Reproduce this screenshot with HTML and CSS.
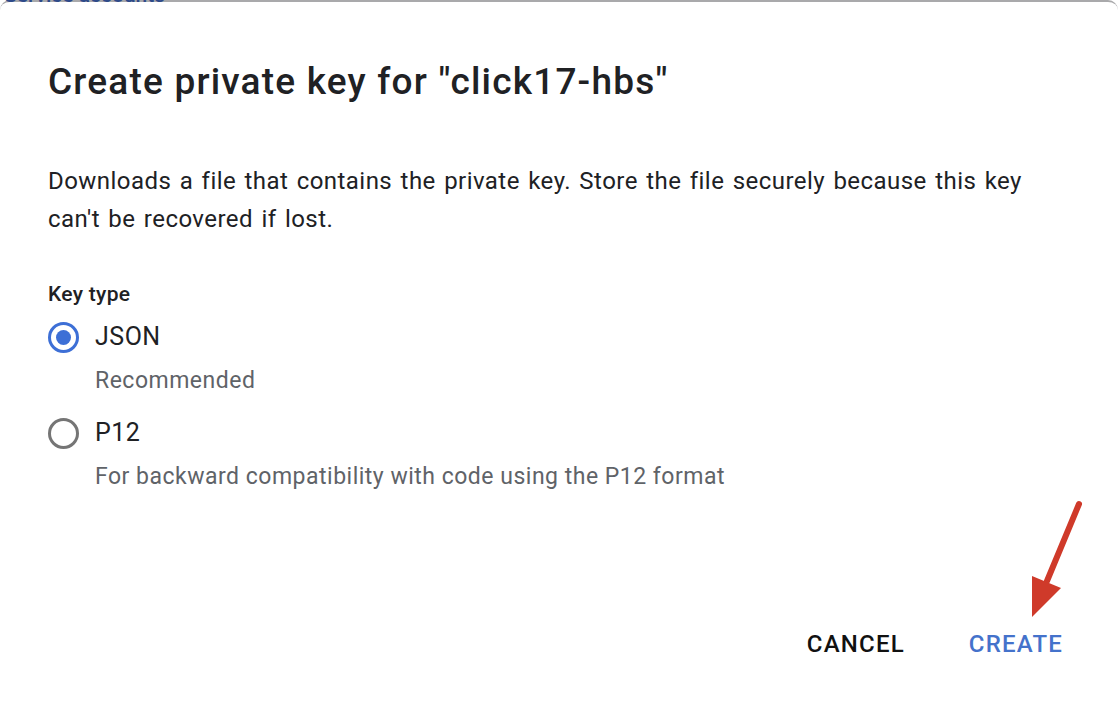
FILE: index.html
```html
<!DOCTYPE html>
<html>
<head>
<meta charset="utf-8">
<link rel="stylesheet" href="styles.css">
</head>
<body>
<div class="page">
  <div class="behind"><span class="behind-text">Service accounts</span></div>
  <div class="dialog">
    <h1 class="title">Create private key for "click17-hbs"</h1>
    <p class="desc">Downloads a file that contains the private key. Store the file securely because this key can't be recovered if lost.</p>
    <div class="field-label">Key type</div>
    <div class="options">
      <div class="option">
        <span class="radio checked"></span>
        <div class="option-body">
          <div class="option-title">JSON</div>
          <div class="option-hint">Recommended</div>
        </div>
      </div>
      <div class="option">
        <span class="radio"></span>
        <div class="option-body">
          <div class="option-title">P12</div>
          <div class="option-hint">For backward compatibility with code using the P12 format</div>
        </div>
      </div>
    </div>
    <div class="actions">
      <button class="btn cancel">CANCEL</button>
      <button class="btn create">CREATE</button>
    </div>
  </div>
  <svg class="arrow" width="70" height="126" viewBox="0 0 70 126">
    <line x1="59" y1="7" x2="27" y2="84" stroke="#cf3a2a" stroke-width="6" stroke-linecap="round"/>
    <polygon points="12,120 12,79 41,91" fill="#cf3a2a"/>
  </svg>
</div>
</body>
</html>
```
FILE: styles.css
```css
* { box-sizing: border-box; }
html, body { margin: 0; padding: 0; }
body {
  width: 1118px;
  height: 712px;
  overflow: hidden;
  background: #fff;
  font-family: Roboto, "Noto Sans", sans-serif;
}
.page {
  position: relative;
  width: 1118px;
  height: 712px;
  border-top: 2px solid #a9a9ab;
  border-radius: 10px 10px 0 0;
}
.behind {
  position: absolute;
  left: 0;
  top: -2px;
  width: 170px;
  height: 4px;
  overflow: hidden;
}
.behind-text {
  position: absolute;
  left: 4px;
  top: -14px;
  font-size: 21px;
  line-height: 18px;
  color: #2e4a8a;
  font-weight: 500;
  white-space: nowrap;
}
.dialog {
  padding: 0 48px;
  display: flex;
  flex-direction: column;
}
.title {
  margin: 56px 0 0 0;
  font-size: 37px;
  line-height: 48px;
  font-weight: 500;
  color: #202124;
  letter-spacing: 1.2px;
}
.desc {
  margin: 56px 0 0 0;
  font-size: 24px;
  line-height: 38px;
  letter-spacing: 0.45px;
  word-spacing: 2px;
  color: #202124;
  max-width: 1000px;
}
.field-label {
  margin-top: 43px;
  font-size: 21px;
  line-height: 26px;
  letter-spacing: 0.3px;
  font-weight: 500;
  color: #202124;
}
.options {
  margin-top: 13px;
  display: flex;
  flex-direction: column;
  gap: 20px;
}
.option {
  display: flex;
  gap: 16px;
  align-items: flex-start;
}
.radio {
  width: 31px;
  height: 31px;
  border-radius: 50%;
  border: 3.5px solid #757575;
  flex: none;
  margin-top: 2px;
  display: flex;
  align-items: center;
  justify-content: center;
}
.radio.checked {
  border-color: #3d6fd6;
}
.radio.checked::after {
  content: "";
  width: 15px;
  height: 15px;
  border-radius: 50%;
  background: #3d6fd6;
}
.option-title {
  font-size: 25px;
  line-height: 34px;
  letter-spacing: 0.5px;
  color: #202124;
}
.option-hint {
  margin-top: 12px;
  font-size: 23px;
  line-height: 30px;
  letter-spacing: 0.5px;
  color: #5f6368;
}
.actions {
  margin-top: 137px;
  display: flex;
  justify-content: flex-end;
  gap: 64px;
  padding-right: 7px;
}
.btn {
  background: none;
  border: none;
  padding: 0;
  font-family: Roboto, "Noto Sans", sans-serif;
  font-size: 24px;
  line-height: 30px;
  font-weight: 500;
  letter-spacing: 1.2px;
}
.cancel { color: #111; }
.create { color: #4472cb; }
.arrow {
  position: absolute;
  left: 1020px;
  top: 495px;
}
```
